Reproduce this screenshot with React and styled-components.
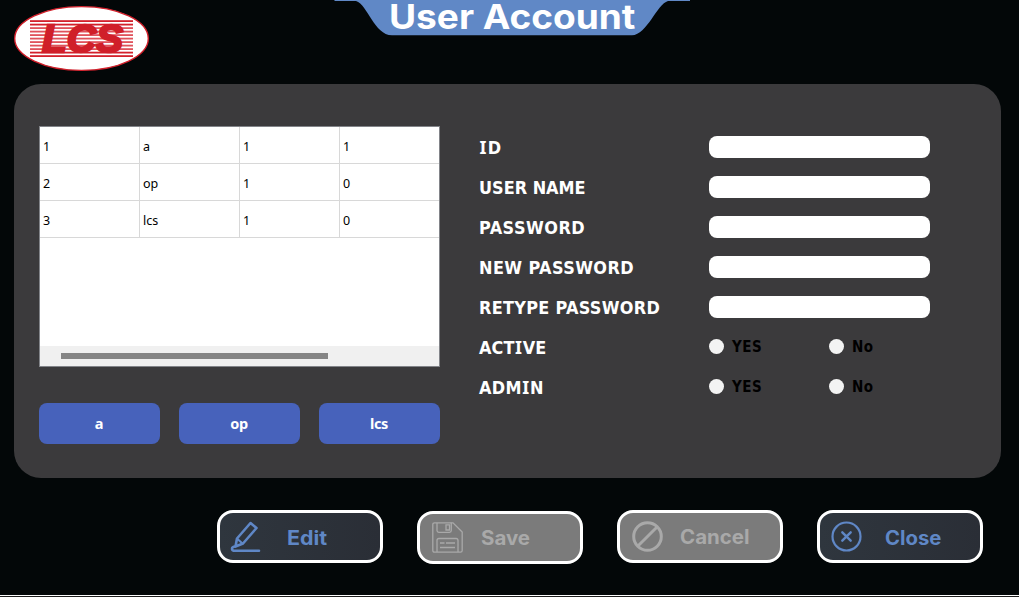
import React from 'react';
import styled, { createGlobalStyle } from 'styled-components';

const GlobalStyle = createGlobalStyle`
  * { box-sizing: border-box; }
  body { margin: 0; background: #030708; overflow: hidden; }
`;

const Page = styled.div`
  width: 1019px;
  height: 597px;
  display: flex;
  flex-direction: column;
  background: #030708;
  font-family: "Noto Sans", "Open Sans", sans-serif;
`;

const Header = styled.header`
  height: 84px;
  display: flex;
  align-items: flex-start;
  padding-left: 13px;
`;

const Logo = styled.svg`
  display: block;
  flex: none;
  margin-top: 5px;
`;

const TitleTab = styled.div`
  position: relative;
  width: 356px;
  height: 37px;
  margin-left: 184px;
`;

const TabShape = styled.svg`
  display: block;
`;

const Title = styled.h1`
  position: absolute;
  left: 54.5px;
  top: 0;
  margin: 0;
  font: 700 33.5px/34px Inter, sans-serif;
  white-space: nowrap;
  color: #fff;
  transform: scaleX(1.105);
  transform-origin: left;
`;

const Panel = styled.main`
  width: 987px;
  height: 394px;
  margin-left: 14px;
  padding: 42px 25px 0;
  border-radius: 27px;
  background: #3b3a3c;
  display: flex;
  gap: 39px;
`;

const Left = styled.section`
  width: 401px;
`;

const Grid = styled.div`
  height: 241px;
  border: 1px solid #828489;
  background: #fff;
  display: flex;
  flex-direction: column;
`;

const GridRow = styled.div`
  display: grid;
  grid-template-columns: 100px 100px 100px 99px;
  height: 37px;
`;

const Cell = styled.div`
  height: 37px;
  border-bottom: 1px solid #d8d8d8;
  border-right: ${p => (p.$last ? 'none' : '1px solid #d8d8d8')};
  padding: 3px 0 0 3px;
  font-size: 12.5px;
  line-height: 33px;
  color: #000;
`;

const ScrollTrack = styled.div`
  margin-top: auto;
  height: 20px;
  background: #f0f0f0;
  padding: 7px 0 0 21px;
`;

const ScrollThumb = styled.div`
  width: 267px;
  height: 6px;
  background: #858585;
`;

const UserButtons = styled.div`
  display: flex;
  gap: 19px;
  margin-top: 36px;
`;

const UserButton = styled.button`
  width: 121px;
  height: 41px;
  border: 0;
  border-radius: 8px;
  padding: 0 1px 0 0;
  background: #4762bb;
  color: #fff;
  font: 700 14.5px/41px "Noto Sans", sans-serif;
  letter-spacing: -0.3px;
`;

const Form = styled.section`
  padding-top: 1px;
`;

const FormRow = styled.div`
  height: 40px;
  display: grid;
  grid-template-columns: 230px 221px;
  grid-template-rows: 40px;
  align-items: center;
`;

const Label = styled.label`
  height: 40px;
  font-family: "DejaVu Sans Condensed", "DejaVu Sans", sans-serif;
  font-stretch: condensed;
  font-weight: 700;
  font-size: 17.9px;
  line-height: 42px;
  letter-spacing: ${p => p.$spacing}px;
  color: #fff;
  white-space: nowrap;
`;

const SlabI = styled.span`
  font-family: "Noto Sans", sans-serif;
  font-stretch: normal;
  line-height: 1;
  margin: 0 0.5px;
`;

const Field = styled.input`
  width: 221px;
  height: 22px;
  border: 0;
  border-radius: 8px;
  background: #fff;
  padding: 0 6px;
`;

const Options = styled.div`
  display: grid;
  grid-template-columns: 120px 100px;
`;

const Option = styled.div`
  display: flex;
  align-items: center;
  gap: 7.5px;
  color: #000;
  font: 700 15px/22px "DejaVu Sans Condensed", "DejaVu Sans", sans-serif;
  font-stretch: condensed;
  letter-spacing: 0.5px;
`;

const Radio = styled.span`
  width: 15px;
  height: 15px;
  margin: -2px 0 0 0.4px;
  border-radius: 50%;
  background: #f3f3f3;
`;

const Footer = styled.footer`
  height: 117px;
  padding: 32px 0 0 217px;
  display: flex;
  gap: 33.85px;
  align-items: flex-start;
`;

const Action = styled.button`
  width: 166px;
  height: 53px;
  margin: ${p => (p.$low ? 1 : 0)}px 0 0;
  padding: 0;
  border: 3px solid #fff;
  border-radius: 16px;
  background: ${p => (p.$disabled ? '#7b7b7b' : 'linear-gradient(90deg, #2f363e, #2a2e36)')};
  color: ${p => (p.$disabled ? '#a9a9a9' : '#5f87c6')};
  display: flex;
  align-items: center;
`;

const ActionIcon = styled.svg`
  flex: none;
  margin-left: ${p => p.$x}px;
  margin-right: ${p => p.$gap}px;
  fill: none;
  stroke: currentColor;
`;

const ActionText = styled.span`
  font: 700 19.5px/24px Inter, sans-serif;
  padding-top: ${p => p.$drop || 0}px;
  transform: scaleX(${p => p.$stretch});
  transform-origin: left;
`;

const BottomLine = styled.div`
  height: 2px;
  border-top: 1px solid #fff;
  background: #1c1c1c;
`;

const users = [
  ['1', 'a', '1', '1'],
  ['2', 'op', '1', '0'],
  ['3', 'lcs', '1', '0'],
];

const fields = [
  ['ID', 0.8],
  ['USER NAME', 0],
  ['PASSWORD', 0.5],
  ['NEW PASSWORD', 0.42],
  ['RETYPE PASSWORD', 0.3],
];

const switches = [
  ['ACTIVE', 0.1],
  ['ADMIN', 0.3],
];

const stripes = Array.from({ length: 11 }, (_, i) => i);

function FieldLabel({ text, spacing }) {
  const [before, after] = text.split('I');
  return (
    <Label $spacing={spacing}>
      {before}
      {after !== undefined && <SlabI>I</SlabI>}
      {after}
    </Label>
  );
}

export default function App() {
  return (
    <>
      <GlobalStyle />
      <Page>
        <Header>
          <Logo width="137" height="67" viewBox="13 5 137 67">
            <ellipse cx="81.5" cy="38.5" rx="66.8" ry="31.9" fill="#fff" stroke="#d3202b" strokeWidth="1.4" />
            {stripes.map(i => (
              <rect
                key={i}
                x="30"
                y={20.2 + i * 3.5}
                width="103"
                height="1.8"
                fill={i < 2 || i > 8 ? '#d3202b' : '#e0525b'}
              />
            ))}
            <text
              x="42"
              y="51.6"
              textLength="81"
              lengthAdjust="spacingAndGlyphs"
              fontFamily="Liberation Sans, sans-serif"
              fontWeight="700"
              fontStyle="italic"
              fontSize="38"
              fill="#d01f29"
              stroke="#d01f29"
              strokeWidth="2.4"
            >
              LCS
            </text>
          </Logo>
          <TitleTab>
            <TabShape width="356" height="37" viewBox="334 0 356 37">
              <path
                d="M334.500 0H690V1H668C657 4 647 35 632 35.300H392C374 35 368 5 356 1H334.500Z"
                fill="#6088c6"
              />
            </TabShape>
            <Title>User Account</Title>
          </TitleTab>
        </Header>

        <Panel>
          <Left>
            <Grid>
              {users.map(row => (
                <GridRow key={row[0]}>
                  {row.map((value, i) => (
                    <Cell key={i} $last={i === 3}>{value}</Cell>
                  ))}
                </GridRow>
              ))}
              <ScrollTrack>
                <ScrollThumb />
              </ScrollTrack>
            </Grid>
            <UserButtons>
              {users.map(row => (
                <UserButton key={row[1]}>{row[1]}</UserButton>
              ))}
            </UserButtons>
          </Left>
          <Form>
            {fields.map(([name, spacing]) => (
              <FormRow key={name}>
                <FieldLabel text={name} spacing={spacing} />
                <Field />
              </FormRow>
            ))}
            {switches.map(([name, spacing]) => (
              <FormRow key={name}>
                <FieldLabel text={name} spacing={spacing} />
                <Options>
                  <Option><Radio />YES</Option>
                  <Option><Radio />No</Option>
                </Options>
              </FormRow>
            ))}
          </Form>
        </Panel>

        <Footer>
          <Action>
            <ActionIcon $x={10} $gap={26} width="31" height="32" viewBox="0 0 31 32" strokeWidth="2.6" strokeLinejoin="round" strokeLinecap="round">
              <path d="M20.500 2L26.500 7L13 22.500L5.500 25.500L7 17.500Z" />
              <path d="M7.500 18L12.500 22.500" strokeWidth="2" />
              <path d="M5 25.500C1 25.500 1 29.800 5 29.800H29" />
            </ActionIcon>
            <ActionText $stretch={1.1} $drop={2}>Edit</ActionText>
          </Action>
          <Action $disabled $low>
            <ActionIcon $x={12} $gap={18} width="31" height="31" viewBox="0 0 31 31" strokeWidth="1.3">
              <path d="M2.500 .8H21L30.200 10V28.500Q30.200 30.200 28.500 30.200H2.500Q.8 30.200 .8 28.500V2.500Q.8 .8 2.500 .8Z" />
              <path d="M5 .8V8.500Q5 10.300 6.800 10.300H17.500Q19.300 10.300 19.300 8.500V.8M14 2.800H17.500V8H14Z" />
              <path d="M5 30V18.500Q5 16.500 7 16.500H24Q26 16.500 26 18.500V30M8 21H12.500M14 21H23M8 25.500H23" />
            </ActionIcon>
            <ActionText $stretch={1.05}>Save</ActionText>
          </Action>
          <Action $disabled>
            <ActionIcon $x={12} $gap={17} width="31" height="31" viewBox="0 0 31 31" strokeWidth="3">
              <circle cx="15.500" cy="15.500" r="13.800" />
              <path d="M5.700 25.300L25.300 5.700" />
            </ActionIcon>
            <ActionText $stretch={1.05}>Cancel</ActionText>
          </Action>
          <Action>
            <ActionIcon $x={11} $gap={23} width="31" height="31" viewBox="0 0 31 31" strokeWidth="2.2">
              <circle cx="15.500" cy="15.500" r="14" />
              <path d="M11.300 11.300L19.700 19.700M19.700 11.300L11.300 19.700" strokeWidth="2.400" strokeLinecap="round" />
            </ActionIcon>
            <ActionText $stretch={1.04} $drop={2}>Close</ActionText>
          </Action>
        </Footer>
        <BottomLine />
      </Page>
    </>
  );
}
